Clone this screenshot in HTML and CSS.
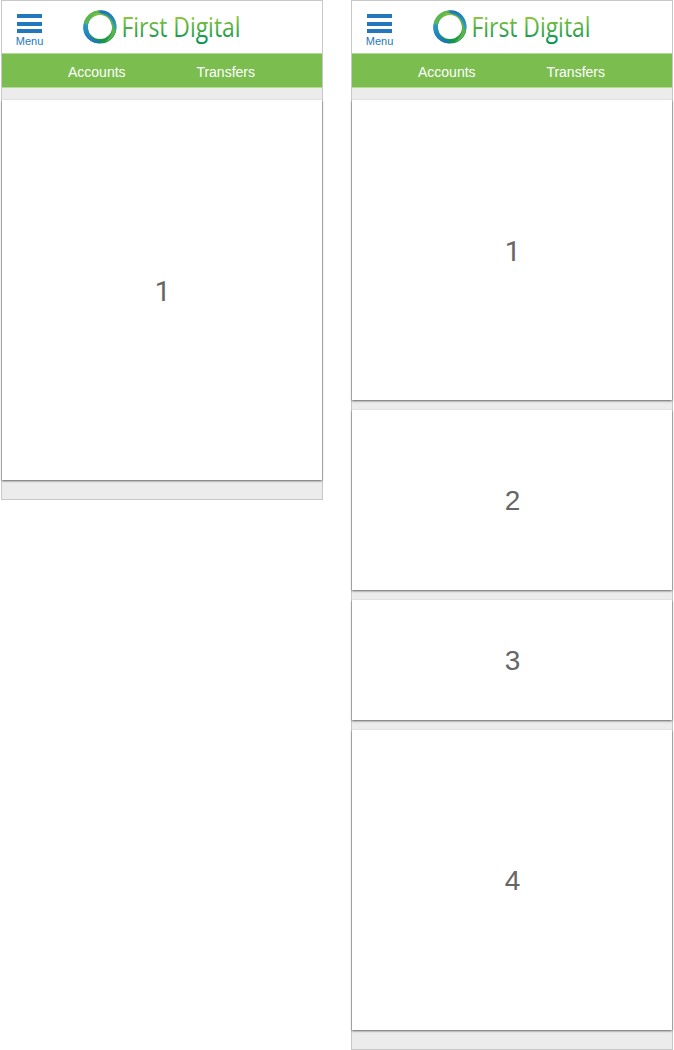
FILE: index.html
```html
<!DOCTYPE html>
<html lang="en">
<head>
<meta charset="utf-8">
<title>First Digital</title>
<link rel="stylesheet" href="styles.css">
</head>
<body>
<svg class="defs" width="0" height="0" aria-hidden="true">
  <defs>
    <linearGradient id="word" gradientUnits="userSpaceOnUse" x1="0" y1="10" x2="0" y2="34"><stop offset="0" stop-color="#8cc83f"/><stop offset="1" stop-color="#05924d"/></linearGradient>
    <linearGradient id="green" x1="0" y1="0" x2="0" y2="1"><stop offset="0" stop-color="#82c341"/><stop offset="1" stop-color="#149447"/></linearGradient>
    <linearGradient id="blue" x1="0" y1="0" x2="0" y2="1"><stop offset="0" stop-color="#2fb0c8"/><stop offset="1" stop-color="#1c72bb"/></linearGradient>
    <linearGradient id="blue2" x1="0" y1="0" x2="0" y2="1"><stop offset="0" stop-color="#1c72b8"/><stop offset="1" stop-color="#35b0c8"/></linearGradient>
    <symbol id="logo" viewBox="0 0 164 40">
      <circle cx="19" cy="20" r="14.3" fill="none" stroke="url(#green)" stroke-width="4.4"/>
      <path d="M6 10C2 15 1 22 4 28C8 35 16 38 25 35C15 35 8 30 7 22C6 17 8 12 13 7Z" fill="url(#blue)"/>
      <path d="M13 5C21 1 29 4 33 11C36 16 36 22 34 27C33 19 30 11 24 8C20 6 17 5 13 5Z" fill="url(#blue2)"/>
      <path d="M3 16C5 8 12 3 20 4C13 6 8 11 6 18Z" fill="#5fb84c"/>
      <path d="M35 23C34 31 26 37 18 36C25 34 30 29 32 22Z" fill="#1b9b4a"/>
      <path d="M22 6C29 9 33 15 33 22L35 24C32 31 28 34 24 35C29 31 32 26 31 20C30 14 27 9 22 6Z" fill="#5db449"/>
      <text class="wordmark" x="40.5" y="30" textLength="119" lengthAdjust="spacingAndGlyphs" fill="url(#word)">First Digital</text>
    </symbol>
  </defs>
</svg>
<main class="screens">
  <section class="phone">
    <header class="header">
      <div class="menu"><div class="bars"><i></i><i></i><i></i></div><span>Menu</span></div>
      <svg class="logo" width="164" height="40"><use href="#logo"/></svg>
    </header>
    <nav class="nav"><span>Accounts</span><span>Transfers</span></nav>
    <div class="cards">
      <div class="card full one">1</div>
    </div>
  </section>
  <section class="phone">
    <header class="header">
      <div class="menu"><div class="bars"><i></i><i></i><i></i></div><span>Menu</span></div>
      <svg class="logo" width="164" height="40"><use href="#logo"/></svg>
    </header>
    <nav class="nav"><span>Accounts</span><span>Transfers</span></nav>
    <div class="cards">
      <div class="card large one">1</div>
      <div class="card medium">2</div>
      <div class="card small">3</div>
      <div class="card large">4</div>
    </div>
  </section>
</main>
</body>
</html>
```
FILE: styles.css
```css
* { box-sizing: border-box; }
body { margin: 0; background: #fff; font-family: "Liberation Sans", Arial, sans-serif; }
.defs { display: block; }
.screens { display: flex; align-items: flex-start; gap: 28px; padding-left: 1px; }
.phone { width: 322px; border: 1px solid #c8c8c8; background: #ececec; }
.header { display: flex; height: 52px; background: #fff; }
.menu { width: 55px; padding-top: 13px; display: flex; flex-direction: column; align-items: center; color: #2377bc; font-size: 11px; line-height: 13px; }
.bars { width: 25px; height: 19px; display: flex; flex-direction: column; justify-content: space-between; margin-bottom: 2px; }
.bars i { display: block; height: 4px; background: #2377bc; }
.logo { display: block; margin: 6px 0 0 24px; }
.wordmark { font-family: "Open Sans", sans-serif; font-size: 27px; font-weight: 400; }
.nav { display: flex; justify-content: space-between; height: 35px; padding: 0 67px 0 66px; border-top: 1px solid #b2db97; border-bottom: 1px solid #b2db97; background: #7bbd4f; color: #fff; font-size: 14px; line-height: 36px; }
.cards { display: flex; flex-direction: column; gap: 10px; padding: 12px 0 19px; }
.card { display: flex; align-items: center; justify-content: center; padding: 2px 0 0 1px; background: #fff; color: #666; font-size: 28px; box-shadow: 0 1px 2px rgba(0, 0, 0, .6); }
.one { font-family: Roboto, sans-serif; }
.full { height: 380px; }
.large { height: 300px; }
.medium { height: 180px; }
.small { height: 120px; }
```
